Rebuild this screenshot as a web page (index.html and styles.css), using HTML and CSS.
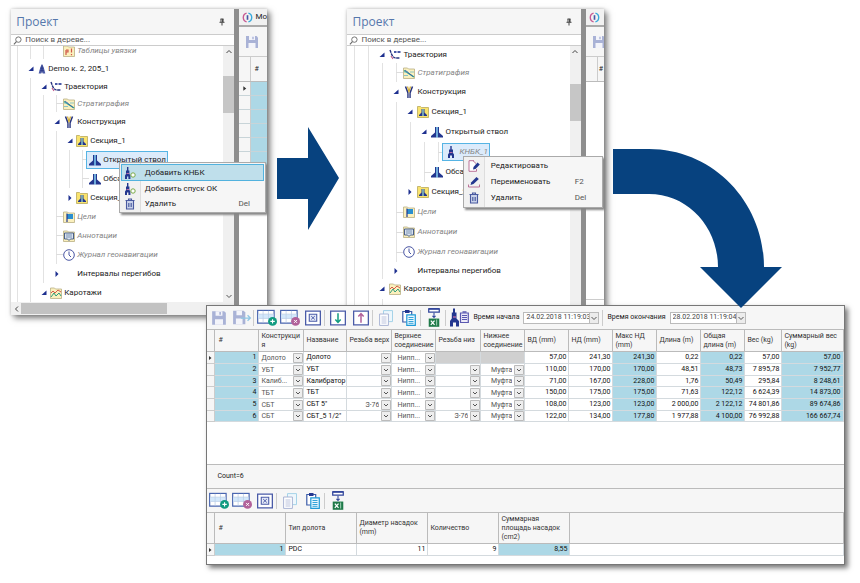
FILE: index.html
```html
<!DOCTYPE html>
<html lang="ru">
<head>
<meta charset="utf-8">
<title>Проект</title>
<link rel="stylesheet" href="styles.css">
</head>
<body>
<svg class="defs" aria-hidden="true">
  <symbol id="pin" viewBox="0 0 8 8"><path d="M2.500 1h3M3 1v3M5 1v3M4.600 1v3M1.500 4.300h5M4 4.500V7.500" fill="none" stroke="#444"/></symbol>
  <symbol id="lens" viewBox="0 0 10 10"><circle cx="6" cy="4" r="3" fill="none" stroke="#666"/><path d="M3.800 6.200 1 9.200" stroke="#666" stroke-width="1.200"/></symbol>
  <symbol id="open" viewBox="0 0 6 6"><path d="M5.500.5V5H.5z" fill="#1d2f8f"/></symbol>
  <symbol id="closed" viewBox="0 0 6 6"><path d="M1.500 0 4.500 3l-3 3z" fill="#1d2f8f"/></symbol>
  <symbol id="tower" viewBox="0 0 12 12"><path d="M6 0 4 4 2 11.500H5l1-3 1 3h3L8 4z" fill="#4a5aa8"/><path d="M6 1v10M3.500 8h5M4.300 5h3.400" stroke="#26337f" stroke-width=".8"/></symbol>
  <symbol id="path" viewBox="0 0 12 12"><path d="M1 1l1.500 4Q4 9 7 9h4" fill="none" stroke="#26337f" stroke-width="1.400" stroke-dasharray="3 .6"/><path d="M5 3h2.500M8.500 3h3" stroke="#4a5aa8" stroke-width="1.800"/><path d="M2 7l2 3" stroke="#c05a8a" stroke-width="1.200"/></symbol>
  <symbol id="folder" viewBox="0 0 12 12"><path d="M.5 1h4l1 1h6v9.500H.5z" fill="#fbf0bd" stroke="#b9ae84" stroke-width=".8"/></symbol>
  <symbol id="strat" viewBox="0 0 12 12"><use href="#folder"/><path d="M1 3.500 11 10" fill="none" stroke="#2c9d8c" stroke-width="1.400"/><path d="M1 5h4M7 5h4M1 8.500h4" stroke="#6fb9c9" stroke-width=".8"/><path d="M2 3l8 6.500" stroke="#3a5bb0" stroke-width=".8"/></symbol>
  <symbol id="casing" viewBox="0 0 12 12"><path d="M2.500.5 5 7v5M9.500.5 7 7v5" fill="none" stroke="#26337f" stroke-width="1.500"/><path d="M4.500.5 6 6 7.500.5" fill="none" stroke="#d7b441" stroke-width="1.300"/><path d="M6 6v6" stroke="#8c93b8"/></symbol>
  <symbol id="well" viewBox="0 0 12 12"><path d="M4 1h1.500v10.500H0V10l4-3.500zM8 1H6.500v10.500H12V10L8 6.500z" fill="#24378f"/><path d="M6 1v10.500" stroke="#58b6e6" stroke-width="1.200"/></symbol>
  <symbol id="section" viewBox="0 0 12 12"><path d="M.5.5h3l1 1h7v10H.5z" fill="#f9e36d" stroke="#b9a95c" stroke-width=".8"/><path d="M4.500 3h1v7h-3.500V9l2.500-2.500zM7.500 3h-1v7H10V9L7.500 6.500z" fill="#24378f"/><path d="M6 3v7" stroke="#58b6e6"/></symbol>
  <symbol id="bha" viewBox="0 0 12 12"><path d="M5.300 0h1.400v3.500H8V7l1 1.500V12H7V9.500H5V12H3V8.500L4 7V3.500h1.300z" fill="#24378f"/><path d="M4.500 6.500h3" stroke="#b76aa6"/></symbol>
  <symbol id="bhaadd" viewBox="0 0 12 12"><path d="M3 0h1.400v3.500h1V7l1 1.500V12h-2V9.500H3V12H1V8.500L2 7V3.500h1z" fill="#24378f"/><path d="M2.500 6.500h2.500" stroke="#b76aa6"/><circle cx="9" cy="8" r="2.200" fill="#fff" stroke="#79a947"/></symbol>
  <symbol id="flag" viewBox="0 0 12 12"><use href="#folder"/><path d="M4 8V3h6v5z" fill="#2a8fd0"/><path d="M4 2.500V11" stroke="#24378f" stroke-width="1.200"/></symbol>
  <symbol id="note" viewBox="0 0 12 12"><use href="#folder"/><path d="M1.500 3h9v6h-3L6 10.500 4.500 9h-3z" fill="#d9e3ee" stroke="#39507f" stroke-width=".9"/><path d="M3 5h6M3 7h6" stroke="#6580a8" stroke-width=".8"/></symbol>
  <symbol id="clock" viewBox="0 0 12 12"><circle cx="6" cy="6" r="5.300" fill="#fff" stroke="#4a56a3"/><path d="M6 2.500V6l2 2" fill="none" stroke="#4a56a3"/></symbol>
  <symbol id="logs" viewBox="0 0 12 12"><use href="#folder"/><path d="M1 6l2-2 2 2 3-3 3 2" fill="none" stroke="#d25a4a"/><path d="M1 10l3-4 2 3 3-3 2 3" fill="none" stroke="#2c9d7c"/></symbol>
  <symbol id="tie" viewBox="0 0 12 12"><use href="#folder"/><path d="M3 5v5M3 5h2v2H3M8.500 3.500v4M8.500 9v1.200" fill="none" stroke="#d0574a" stroke-width="1.200"/></symbol>
  <symbol id="bin" viewBox="0 0 12 12"><path d="M1.500 2.500h9M4.500 2V1h3v1M2.500 3v8h7V3" fill="#c9d2ea" stroke="#4a5aa0" stroke-width="1.100"/><path d="M4.500 5v4M6 5v4M7.500 5v4" stroke="#4a5aa0" stroke-width=".8"/></symbol>
  <symbol id="edit" viewBox="0 0 12 12"><path d="M6 .7H1v10.600h7.500V9M5 .7 8 3.500" fill="#fff" stroke="#b5648f" stroke-width=".9"/><path d="M5 9.500 5.500 7 9.500 2.500l2.300 1.900L7.500 9z" fill="#24378f"/></symbol>
  <symbol id="rename" viewBox="0 0 12 12"><path d="M.5 8.500v2.500h11V8.500" fill="none" stroke="#b5648f" stroke-width=".9"/><path d="M2.500 9l.8-2.700L8.500 1l2.300 1.900L5.500 8z" fill="#24378f"/></symbol>
  <symbol id="app" viewBox="0 0 12 12"><path d="M5 1.200a5 5 0 0 0 0 9.600" fill="none" stroke="#c75a93" stroke-width="1.500"/><path d="M7 1.200a5 5 0 0 1 0 9.600" fill="none" stroke="#36a9dc" stroke-width="1.500"/><path d="M6 3.500v5" stroke="#4456a6" stroke-width="1.800"/></symbol>
  <symbol id="save" viewBox="0 0 14 14"><path d="M1 1h10.500L13 2.500V13H1z" fill="#a9b2d6"/><path d="M4 1h6v4H4zM3.500 8h7v5h-7z" fill="#f3f4fa"/><path d="M8 1.800v2.400" stroke="#a9b2d6" stroke-width="1.400"/></symbol>
  <symbol id="saveas" viewBox="0 0 18 14"><path d="M1 1h9.500L12 2.500V13H1z" fill="#a9b2d6"/><path d="M4 1h5v4H4zM3.500 8h6v5h-6z" fill="#f3f4fa"/><path d="M8 7.500h8.500M14 5l2.500 2.500L14 10" fill="none" stroke="#8fc6e4" stroke-width="1.200"/></symbol>
  <symbol id="grid" viewBox="0 0 18 15"><path d="M.6 1h14.800v11.500H.6z" fill="#fff" stroke="#4a66b0" stroke-width="1.100"/><path d="M1.200 4.500h13.600v3.800H1.200z" fill="#d3e8fb"/><path d="M5.500 1.500V12M10.300 1.500V12M1.200 4.500h13.600M1.200 8.300h13.600" stroke="#bccfe8" stroke-width=".7"/></symbol>
  <symbol id="rowadd" viewBox="0 0 18 15"><use href="#grid"/><circle cx="14" cy="11" r="4" fill="#119b80"/><path d="M14 9v4M12 11h4" stroke="#fff"/></symbol>
  <symbol id="rowdel" viewBox="0 0 18 15"><use href="#grid"/><circle cx="14" cy="11" r="4" fill="#b2619a"/><path d="M12.700 9.700l2.600 2.600M15.300 9.700l-2.600 2.600" stroke="#fff" stroke-width=".9"/></symbol>
  <symbol id="clear" viewBox="0 0 15 14"><path d="M.6.6h13.800v12.800H.6z" fill="#fff" stroke="#4a5ba8" stroke-width="1.200"/><path d="M4 3.500h7v6.500H4z" fill="#e4e9f7" stroke="#4a5ba8"/><path d="M5.800 5.200l3.400 3.200M9.200 5.200 5.800 8.400" stroke="#4a5ba8" stroke-width=".9"/></symbol>
  <symbol id="down" viewBox="0 0 15 14"><path d="M.6.6h13.800v12.800H.6z" fill="#fff" stroke="#4a5ba8" stroke-width="1.200"/><path d="M7.500 2.500V11M5 8.500l2.500 2.700L10 8.500" fill="none" stroke="#119b80" stroke-width="1.400"/></symbol>
  <symbol id="up" viewBox="0 0 15 14"><path d="M.6.6h13.800v12.800H.6z" fill="#fff" stroke="#4a5ba8" stroke-width="1.200"/><path d="M7.500 11.500V3M5 5.500l2.500-2.700L10 5.500" fill="none" stroke="#b2619a" stroke-width="1.400"/></symbol>
  <symbol id="copy" viewBox="0 0 14 16"><path d="M4.500.6h9v11h-9z" fill="#eef7fc" stroke="#a6d3e8"/><path d="M.6 4h8.800v11.400H.6z" fill="#fff" stroke="#a9b4d4"/><path d="M2.500 7h5M2.500 9h5M2.500 11h5M2.500 13h5" stroke="#a9b4d4" stroke-width=".8"/></symbol>
  <symbol id="paste" viewBox="0 0 14 16"><path d="M.8 1.500h8.900V12H.8z" fill="#fff" stroke="#3a5ba8" stroke-width="1.200"/><path d="M3 0h4.500v3H3z" fill="#24378f"/><path d="M4.800 4.800h8.500v10.500H4.800z" fill="#eaf7fe" stroke="#1f9ad6" stroke-width="1.200"/><path d="M6.500 7.500h5M6.500 9.500h5M6.500 11.500h5M6.500 13.300h5" stroke="#1f9ad6" stroke-width=".9"/></symbol>
  <symbol id="excel" viewBox="0 0 12 18"><path d="M1 .8h10V4H1z" fill="#fff" stroke="#33479c" stroke-width="1.200"/><path d="M1 .8h10" stroke="#33479c" stroke-width="1.600"/><path d="M6 4.500V9M4.500 7.500 6 9l1.500-1.500" fill="none" stroke="#33479c"/><path d="M1 10h10v7.800H1z" fill="#1f7a49"/><path d="M3 12l3.500 4M6.500 12 3 16" stroke="#fff" stroke-width="1.200"/><path d="M8.500 11v5.500" stroke="#9fd0b3"/></symbol>
  <symbol id="bhalist" viewBox="0 0 20 18"><path d="M4 0h2v4h1.500v6L10 12.500V18H7v-4H4v4H1v-5.500L2.800 10V4H4z" fill="#24378f"/><path d="M4 8.500h3" stroke="#b76aa6" stroke-width="1.400"/><path d="M11.500 4.500h7.800V14h-7.800z" fill="#eceaf8" stroke="#5a58b0" stroke-width="1.200"/><path d="M13.500 3.500h4" stroke="#5a58b0" stroke-width="1.500"/><path d="M13 7h5M13 9h5M13 11h5" stroke="#5a58b0"/></symbol>
  <symbol id="chev" viewBox="0 0 8 8"><path d="M1.500 3 4 5.500 6.500 3" fill="none" stroke="#555"/></symbol>
  <symbol id="cup" viewBox="0 0 8 8"><path d="M1.500 5 4 2.500 6.500 5" fill="none" stroke="#444"/></symbol>
  <symbol id="cleft" viewBox="0 0 8 8"><path d="M5 1.500 2.500 4 5 6.500" fill="none" stroke="#444"/></symbol>
  <symbol id="cur" viewBox="0 0 6 6"><path d="M2 1l2.500 2L2 5z" fill="#333"/></symbol>
</svg>

<main class="stage">

<section class="window first">
  <div class="project">
    <header class="title"><h2>Проект</h2><svg><use href="#pin"/></svg></header>
    <label class="search"><svg><use href="#lens"/></svg><input type="text" placeholder="Поиск в дереве..." aria-label="Поиск в дереве"></label>
    <div class="body">
      <ul class="tree">
        <li class="top"><i></i><i></i><i class="tick"></i><b></b><svg class="icon"><use href="#tie"/></svg><span class="dim">Таблицы увязки</span></li>
        <li class="root"><i></i><b><svg><use href="#open"/></svg></b><svg class="icon"><use href="#tower"/></svg><span>Demo к. 2, 205_1</span></li>
        <li class="short"><i></i><i></i><b><svg><use href="#open"/></svg></b><svg class="icon"><use href="#path"/></svg><span>Траектория</span></li>
        <li class="short"><i></i><i></i><i></i><b class="tick"></b><svg class="icon"><use href="#strat"/></svg><span class="dim">Стратиграфия</span></li>
        <li><i></i><i></i><i></i><b><svg><use href="#open"/></svg></b><svg class="icon"><use href="#casing"/></svg><span>Конструкция</span></li>
        <li><i></i><i></i><i></i><i></i><b><svg><use href="#open"/></svg></b><svg class="icon"><use href="#section"/></svg><span>Секция_1</span></li>
        <li><i></i><i></i><i></i><i></i><i></i><b class="tick"></b><span class="picked"><svg class="icon"><use href="#well"/></svg><span>Открытый ствол</span></span></li>
        <li><i></i><i></i><i></i><i></i><i></i><b class="tick"></b><svg class="icon"><use href="#well"/></svg><span>Обсаженный</span></li>
        <li><i></i><i></i><i></i><i></i><b><svg><use href="#closed"/></svg></b><svg class="icon"><use href="#section"/></svg><span>Секция_2</span></li>
        <li><i></i><i></i><i></i><b class="tick"></b><svg class="icon"><use href="#flag"/></svg><span class="dim">Цели</span></li>
        <li><i></i><i></i><i></i><b class="tick"></b><svg class="icon"><use href="#note"/></svg><span class="dim">Аннотации</span></li>
        <li><i></i><i></i><i></i><b class="tick"></b><svg class="icon"><use href="#clock"/></svg><span class="dim">Журнал геонавигации</span></li>
        <li><i></i><i></i><i></i><b><svg><use href="#closed"/></svg></b><svg class="icon"></svg><span>Интервалы перегибов</span></li>
        <li><i></i><i></i><b><svg><use href="#open"/></svg></b><svg class="icon"><use href="#logs"/></svg><span>Каротажи</span></li>
      </ul>
      <div class="vbar"><svg><use href="#cup"/></svg><div class="thumb"></div><svg><use href="#chev"/></svg></div>
    </div>
    <div class="hbar"><svg><use href="#cleft"/></svg><div class="thumb"></div></div>
  </div>
  <div class="splitter"></div>
  <div class="doc">
    <div class="tab"><svg><use href="#app"/></svg><span>Мо</span></div>
    <div class="tools"><svg><use href="#save"/></svg></div>
    <div class="head"><span></span><span>#</span></div>
    <div class="line"><span><svg><use href="#cur"/></svg></span><span></span></div>
    <div class="line"><span></span><span></span></div>
    <div class="line"><span></span><span></span></div>
    <div class="line"><span></span><span></span></div>
    <div class="line"><span></span><span></span></div>
    <div class="line"><span></span><span></span></div>
    <div class="line"><span></span><span></span></div>
    <div class="line"><span></span><span></span></div>
    <div class="line"><span></span><span></span></div>
  </div>
  <menu class="popup">
    <li><button class="hot"><svg><use href="#bhaadd"/></svg><span>Добавить КНБК</span></button></li>
    <li><button><svg><use href="#bhaadd"/></svg><span>Добавить спуск ОК</span></button></li>
    <li><button><svg><use href="#bin"/></svg><span>Удалить</span><kbd>Del</kbd></button></li>
  </menu>
</section>

<svg class="arrow" viewBox="0 0 62 103" aria-hidden="true"><path d="M0 31h31V0l31 51-31 52V72H0z"/></svg>

<section class="window second">
  <div class="project">
    <header class="title"><h2>Проект</h2><svg><use href="#pin"/></svg></header>
    <label class="search"><svg><use href="#lens"/></svg><input type="text" placeholder="Поиск в дереве..." aria-label="Поиск в дереве"></label>
    <div class="body">
      <ul class="tree">
        <li class="short"><i></i><i></i><b><svg><use href="#open"/></svg></b><svg class="icon"><use href="#path"/></svg><span>Траектория</span></li>
        <li class="near"><i></i><i></i><i></i><b class="tick"></b><svg class="icon"><use href="#strat"/></svg><span class="dim">Стратиграфия</span></li>
        <li><i></i><i></i><i></i><b><svg><use href="#open"/></svg></b><svg class="icon"><use href="#casing"/></svg><span>Конструкция</span></li>
        <li><i></i><i></i><i></i><i></i><b><svg><use href="#open"/></svg></b><svg class="icon"><use href="#section"/></svg><span>Секция_1</span></li>
        <li><i></i><i></i><i></i><i></i><i></i><b><svg><use href="#open"/></svg></b><svg class="icon"><use href="#well"/></svg><span>Открытый ствол</span></li>
        <li><i></i><i></i><i></i><i></i><i></i><i></i><b class="tick"></b><span class="picked"><svg class="icon"><use href="#bha"/></svg><span class="dim">КНБК_1</span></span></li>
        <li><i></i><i></i><i></i><i></i><i></i><b class="tick"></b><svg class="icon"><use href="#well"/></svg><span>Обсаженный</span></li>
        <li><i></i><i></i><i></i><i></i><b><svg><use href="#closed"/></svg></b><svg class="icon"><use href="#section"/></svg><span>Секция_2</span></li>
        <li><i></i><i></i><i></i><b class="tick"></b><svg class="icon"><use href="#flag"/></svg><span class="dim">Цели</span></li>
        <li><i></i><i></i><i></i><b class="tick"></b><svg class="icon"><use href="#note"/></svg><span class="dim">Аннотации</span></li>
        <li><i></i><i></i><i></i><b class="tick"></b><svg class="icon"><use href="#clock"/></svg><span class="dim">Журнал геонавигации</span></li>
        <li class="short"><i></i><i></i><i></i><b><svg><use href="#closed"/></svg></b><svg class="icon"></svg><span>Интервалы перегибов</span></li>
        <li><i></i><i></i><b><svg><use href="#open"/></svg></b><svg class="icon"><use href="#logs"/></svg><span>Каротажи</span></li>
        <li><i></i><i></i><i></i></li>
      </ul>
      <div class="vbar"><svg><use href="#cup"/></svg><div class="thumb"></div></div>
    </div>
  </div>
  <div class="splitter"></div>
  <div class="doc">
    <div class="tab"><svg><use href="#app"/></svg></div>
    <div class="tools"><svg><use href="#save"/></svg></div>
    <div class="head"><span></span><span>#</span></div>
    <div class="page"></div>
  </div>
  <menu class="popup">
    <li><button><svg><use href="#edit"/></svg><span>Редактировать</span></button></li>
    <li><button><svg><use href="#rename"/></svg><span>Переименовать</span><kbd>F2</kbd></button></li>
    <li><button><svg><use href="#bin"/></svg><span>Удалить</span><kbd>Del</kbd></button></li>
  </menu>
</section>

<section class="editor">
  <div class="toolbar">
    <button aria-label="Сохранить"><svg class="sq"><use href="#save"/></svg></button>
    <button aria-label="Сохранить как"><svg class="wide"><use href="#saveas"/></svg></button>
    <hr>
    <button aria-label="Добавить строку"><svg class="wide"><use href="#rowadd"/></svg></button>
    <button aria-label="Удалить строку"><svg class="wide"><use href="#rowdel"/></svg></button>
    <button aria-label="Очистить"><svg class="sq"><use href="#clear"/></svg></button>
    <hr>
    <button aria-label="Вниз"><svg class="sq"><use href="#down"/></svg></button>
    <button aria-label="Вверх"><svg class="sq"><use href="#up"/></svg></button>
    <hr>
    <button aria-label="Копировать"><svg class="sq"><use href="#copy"/></svg></button>
    <button aria-label="Вставить"><svg class="sq"><use href="#paste"/></svg></button>
    <hr>
    <button aria-label="Экспорт в Excel"><svg class="wide"><use href="#excel"/></svg></button>
    <hr>
    <button aria-label="КНБК"><svg class="wide"><use href="#bhalist"/></svg></button>
    <label for="from">Время начала</label>
    <span class="date"><input id="from" type="text" value="24.02.2018 11:19:03"><button aria-label="Выбрать дату начала"><svg><use href="#chev"/></svg></button></span>
    <hr>
    <label for="to">Время окончания</label>
    <span class="date"><input id="to" type="text" value="28.02.2018 11:19:04"><button aria-label="Выбрать дату окончания"><svg><use href="#chev"/></svg></button></span>
  </div>
  <div class="sheet">
  <table class="parts">
    <colgroup><col class="w8"><col class="w44"><col class="w45"><col class="w43"><col class="w45"><col class="w44"><col class="w45"><col class="w44"><col class="w44"><col class="w44"><col class="w44"><col class="w44"><col class="w44"><col class="w37"><col class="w61"></colgroup>
    <thead><tr><th></th><th>#</th><th>Конструкци<br>я</th><th>Название</th><th>Резьба верх</th><th>Верхнее соединение</th><th>Резьба низ</th><th>Нижнее соединение</th><th>ВД (mm)</th><th>НД (mm)</th><th>Макс НД (mm)</th><th>Длина (m)</th><th>Общая длина (m)</th><th>Вес (kg)</th><th>Суммарный вес (kg)</th></tr></thead>
    <tbody>
      <tr><td class="mark"><svg><use href="#cur"/></svg></td><td class="calc">1</td><td><select aria-label="Конструкция"><option>Долото</option></select></td><td class="name">Долото</td><td><select aria-label="Резьба верх"><option></option></select></td><td><select class="mid" aria-label="Верхнее соединение"><option>Нипп...</option></select></td><td class="off"></td><td class="off"></td><td>57,00</td><td>241,30</td><td class="calc">241,30</td><td>0,22</td><td class="calc">0,22</td><td>57,00</td><td class="calc">57,00</td></tr>
      <tr><td class="mark"></td><td class="calc">2</td><td><select aria-label="Конструкция"><option>УБТ</option></select></td><td class="name">УБТ</td><td><select aria-label="Резьба верх"><option></option></select></td><td><select class="mid" aria-label="Верхнее соединение"><option>Нипп...</option></select></td><td><select aria-label="Резьба низ"><option></option></select></td><td><select class="end" aria-label="Нижнее соединение"><option>Муфта</option></select></td><td>110,00</td><td>170,00</td><td class="calc">170,00</td><td>48,51</td><td class="calc">48,73</td><td>7 895,78</td><td class="calc">7 952,77</td></tr>
      <tr><td class="mark"></td><td class="calc">3</td><td><select aria-label="Конструкция"><option>Калиб...</option></select></td><td class="name">Калибратор</td><td><select aria-label="Резьба верх"><option></option></select></td><td><select class="mid" aria-label="Верхнее соединение"><option>Нипп...</option></select></td><td><select aria-label="Резьба низ"><option></option></select></td><td><select class="end" aria-label="Нижнее соединение"><option>Муфта</option></select></td><td>71,00</td><td>167,00</td><td class="calc">228,00</td><td>1,76</td><td class="calc">50,49</td><td>295,84</td><td class="calc">8 248,61</td></tr>
      <tr><td class="mark"></td><td class="calc">4</td><td><select aria-label="Конструкция"><option>ТБТ</option></select></td><td class="name">ТБТ</td><td><select aria-label="Резьба верх"><option></option></select></td><td><select class="mid" aria-label="Верхнее соединение"><option>Нипп...</option></select></td><td><select aria-label="Резьба низ"><option></option></select></td><td><select class="end" aria-label="Нижнее соединение"><option>Муфта</option></select></td><td>150,00</td><td>175,00</td><td class="calc">175,00</td><td>71,63</td><td class="calc">122,12</td><td>6 624,39</td><td class="calc">14 873,00</td></tr>
      <tr><td class="mark"></td><td class="calc">5</td><td><select aria-label="Конструкция"><option>СБТ</option></select></td><td class="name">СБТ 5"</td><td><select class="end" aria-label="Резьба верх"><option>З-76</option></select></td><td><select class="mid" aria-label="Верхнее соединение"><option>Нипп...</option></select></td><td><select aria-label="Резьба низ"><option></option></select></td><td><select class="end" aria-label="Нижнее соединение"><option>Муфта</option></select></td><td>108,00</td><td>123,00</td><td class="calc">123,00</td><td>2 000,00</td><td class="calc">2 122,12</td><td>74 801,86</td><td class="calc">89 674,86</td></tr>
      <tr><td class="mark"></td><td class="calc">6</td><td><select aria-label="Конструкция"><option>СБТ</option></select></td><td class="name">СБТ_5 1/2"</td><td><select aria-label="Резьба верх"><option></option></select></td><td><select class="mid" aria-label="Верхнее соединение"><option>Нипп...</option></select></td><td><select class="end" aria-label="Резьба низ"><option>З-76</option></select></td><td><select class="end" aria-label="Нижнее соединение"><option>Муфта</option></select></td><td>122,00</td><td>134,00</td><td class="calc">177,80</td><td>1 977,88</td><td class="calc">4 100,00</td><td>76 992,88</td><td class="calc">166 667,74</td></tr>
    </tbody>
  </table>
  </div>
  <div class="count">Count=6</div>
  <div class="toolbar">
    <button aria-label="Добавить насадку"><svg class="wide"><use href="#rowadd"/></svg></button>
    <button aria-label="Удалить насадку"><svg class="wide"><use href="#rowdel"/></svg></button>
    <button aria-label="Очистить"><svg class="sq"><use href="#clear"/></svg></button>
    <hr>
    <button aria-label="Копировать"><svg class="sq"><use href="#copy"/></svg></button>
    <button aria-label="Вставить"><svg class="sq"><use href="#paste"/></svg></button>
    <hr>
    <button aria-label="Экспорт в Excel"><svg class="wide"><use href="#excel"/></svg></button>
  </div>
  <table class="nozzles">
    <colgroup><col class="w8"><col class="w71"><col class="w71"><col class="w71"><col class="w71"><col class="w71"><col></colgroup>
    <thead><tr><th></th><th>#</th><th>Тип долота</th><th>Диаметр насадок (mm)</th><th>Количество</th><th>Суммарная площадь насадок (cm2)</th><th></th></tr></thead>
    <tbody><tr><td class="mark"><svg><use href="#cur"/></svg></td><td class="calc">1</td><td class="name">PDC</td><td>11</td><td>9</td><td class="calc">8,55</td><td></td></tr></tbody>
  </table>
</section>

<svg class="bend" viewBox="0 0 169 159" aria-hidden="true"><path d="M0 0H36C100 0 151 53 151 118H169L128 159 87 118H105C105 78 75 45 36 45H0z"/></svg>

</main>
</body>
</html>
```
FILE: styles.css
```css
* { box-sizing: border-box; }

body {
  margin: 0;
  background: #fff;
  color: #222;
  font: 8px/10px Roboto, "Noto Sans", sans-serif;
}

button, input, select { font: inherit; color: inherit; }
button { border: 0; padding: 0; background: none; }
svg { display: block; flex: none; }
.defs { position: absolute; width: 0; height: 0; }

/* windows float on a free canvas */
.stage { position: relative; min-height: 100vh; overflow: hidden; }
.window, .editor, .arrow, .bend { position: absolute; }

.window {
  top: 9px;
  width: 29.8%;
  display: flex;
  background: #fff;
  box-shadow: 3px 3px 6px #777, 0 0 3px #ccc;
}
.first { left: 1.3%; --step: 13px; --row: 19px; --doc: 28px; }
.second { left: 40.4%; --step: 14px; --row: 20px; --doc: 18px; }

.project { flex: 1; min-width: 0; display: flex; flex-direction: column; }
.title {
  height: 25px;
  padding: 0 8px 0 5px;
  display: flex;
  align-items: center;
  justify-content: space-between;
  background: #f6f6f6;
}
.title h2 { margin: 0; font: 400 12px/16px "Open Sans", "Noto Sans", sans-serif; color: #5577ac; }
.title svg { width: 8px; height: 8px; }
.search {
  height: 12px;
  padding-left: 2px;
  display: flex;
  align-items: center;
  gap: 3px;
  border: 1px solid #ccc;
  border-width: 1px 0;
}
.search svg { width: 9px; height: 9px; }
.search input { flex: 1; min-width: 0; height: 10px; padding: 0; border: 0; background: none; }
.search input::placeholder { color: #555; opacity: 1; }

.body { display: flex; }
.tree { flex: 1; min-width: 0; margin: 0; padding: 0; list-style: none; overflow: hidden; }
.tree li { height: var(--row); display: flex; align-items: center; white-space: nowrap; }
.tree .short { height: 17px; }
.tree .near { height: 19px; }
.tree .top { height: 17px; margin-top: -4px; }
.tree i, .tree b { flex: none; width: var(--step); align-self: stretch; }
.tree i { background: linear-gradient(#e2e2e2, #e2e2e2) center / 1px 100% no-repeat; }
.tree b { display: flex; align-items: center; justify-content: center; }
.tree b svg { width: 6px; height: 6px; }
.tree b.tick {
  background: linear-gradient(#ddd, #ddd) right center / 7px 1px no-repeat,
    linear-gradient(#e2e2e2, #e2e2e2) center / 1px 100% no-repeat;
}
.icon { width: 12px; height: 12px; margin-right: 2px; }
.root .icon { width: 10px; margin-right: 1px; }
.dim { color: #858585; font-style: italic; }
.picked {
  height: 18px;
  display: flex;
  align-items: center;
  margin-left: -3px;
  padding: 0 1px 0 2px;
  border: 1px solid #56b4e4;
  background: #dcebfb;
}

.vbar {
  width: 11px;
  padding: 2px 0;
  display: flex;
  flex-direction: column;
  align-items: center;
  background: #f0f0f0;
}
.vbar svg { width: 8px; height: 8px; }
.vbar .thumb { width: 100%; height: 37px; margin: 20px 0 auto; background: #c6c6c6; }
.second .vbar .thumb { margin-top: 28px; }
.hbar { height: 13px; padding: 1px 0 1px 2px; display: flex; align-items: center; background: #f0f0f0; }
.hbar svg { width: 8px; height: 8px; }
.hbar .thumb { width: 66%; height: 100%; background: #c2c2c2; }
.splitter { width: 5px; background: #8e8e8e; }

.doc { width: var(--doc); overflow: hidden; background: #fff; }
.tab { height: 18px; padding-left: 3px; display: flex; align-items: center; gap: 2px; border-bottom: 2px solid #aaa; background: #f1f1f1; white-space: nowrap; }
.tab svg { width: 11px; height: 11px; }
.tools { height: 30px; padding-left: 6px; display: flex; align-items: center; background: #f6f6f6; border-bottom: 1px solid #ccc; }
.tools svg { width: 14px; height: 14px; }
.head, .line { display: flex; }
.head { height: 25px; background: #f6f6f6; border-bottom: 1px solid #bbb; line-height: 24px; font-size: 7px; }
.line { height: 14px; }
.head span:first-child, .line span:first-child { width: 12px; flex: none; border-right: 1px solid #ccc; }
.head span:last-child { padding-left: 3px; }
.second .head span:last-child { padding-left: 1px; }
.line span { border-bottom: 1px solid #c8d4d8; }
.line span:first-child { background: #f6f6f6; }
.line span:last-child { flex: 1; background: #add8e6; }
.line svg { width: 7px; height: 7px; margin: 3px 2px; }
.page { height: 218px; border-bottom: 1px solid #ccc; }

/* context menus */
.popup {
  position: absolute;
  margin: 0;
  padding: 1px;
  list-style: none;
  border: 1px solid #aaa;
  background: linear-gradient(90deg, #f1f1f1 20px, #ddd 20px, #ddd 21px, #f6f6f6 21px);
  box-shadow: 2px 2px 2px #888;
}
.first .popup { top: 153px; left: 42%; right: 1px; }
.second .popup { top: 147px; left: 45%; right: 1px; }
.popup button { width: 100%; height: 15px; padding: 0 14px 0 3px; display: flex; align-items: center; text-align: left; white-space: nowrap; }
.second .popup button { height: 16px; }
.popup svg { width: 12px; height: 12px; margin-right: 9px; }
.second .popup svg { margin-right: 11px; }
.popup kbd { width: 12px; margin-left: auto; font: inherit; color: #555; }
.popup .hot { height: 17px; padding: 0 13px 0 2px; border: 1px solid #52b2de; background: #bfdfeb; }

.arrow, .bend { fill: #07427f; }
.arrow { top: 127px; left: 32.2%; width: 62px; height: 103px; }
.bend { top: 149px; left: 71.3%; width: 169px; height: 159px; }

/* assembly editor */
.editor {
  top: 305px;
  left: 24%;
  width: 74.2%;
  border: 1px solid #777;
  background: #fff;
  box-shadow: 3px 3px 5px #777;
  font-size: 7px;
  line-height: 9px;
  padding-bottom: 8px;
}
.toolbar {
  height: 24px;
  display: flex;
  align-items: center;
  background: #f6f6f6;
  border-bottom: 1px solid #bbb;
  white-space: nowrap;
}
.toolbar hr { width: 1px; height: 16px; margin: 0 1px 0 0; border: 0; background: #ccc; }
.toolbar > button { width: 23px; height: 20px; display: flex; align-items: center; justify-content: center; }
.toolbar label { margin: 0 4px 0 3px; }
.sq { width: 16px; height: 16px; }
.wide { width: 20px; height: 19px; }
.date { width: 76px; height: 12px; margin-right: 3px; display: flex; border: 1px solid #bbb; background: #fff; }
.date input { flex: 1; min-width: 0; padding: 0 0 0 2px; border: 0; background: none; color: #444; }
.date button { width: 9px; border-left: 1px solid #bbb; background: #ececec; display: flex; align-items: center; justify-content: center; }
.date svg { width: 8px; height: 8px; }

.sheet { height: 134px; }
table { width: 100%; table-layout: fixed; border-collapse: separate; border-spacing: 0; }
th, td { padding: 0 2px; border: 1px solid #d4dade; border-width: 0 1px 1px 0; white-space: nowrap; overflow: hidden; }
th { height: 22px; padding: 0 0 0 2px; text-align: left; font-weight: 400; color: #333; background: #f6f6f6; border-color: #bbb; white-space: normal; }
td { height: 12px; text-align: right; color: #111; }
.parts tr:nth-child(3n) td { height: 11px; }
td:has(select) { padding: 0; }
td.name { text-align: left; }
td.mark { padding: 0; background: #f6f6f6; border-color: #ccc; }
td.mark svg { width: 6px; height: 6px; }
td.calc { background: #add8e6; }
td.off { background: #d0d0d0; }
select {
  display: block;
  width: 100%;
  height: 10px;
  padding: 0 12px 0 2px;
  border: 0;
  color: #555;
  line-height: 10px;
  appearance: none;
  background: url("data:image/svg+xml,%3Csvg xmlns='http://www.w3.org/2000/svg' width='10' height='10'%3E%3Cpath d='M.5.5h9v9h-9z' fill='%23eee' stroke='%23bbb'/%3E%3Cpath d='M3 4l2 2 2-2' fill='none' stroke='%23555'/%3E%3C/svg%3E") right center no-repeat;
}
select.mid { padding-left: 5px; }
select.end { text-align: right; text-align-last: right; }
.w8 { width: 8px; }
.w37 { width: 37px; }
.w43 { width: 43px; }
.w44 { width: 44px; }
.w45 { width: 45px; }
.w61 { width: 61px; }
.w71 { width: 71px; }

.count { height: 25px; padding-left: 10px; line-height: 23px; background: #f6f6f6; border: 1px solid #bbb; border-width: 1px 0; }
.nozzles th { height: 31px; }
.nozzles th:nth-child(2), .parts th:nth-child(2) { padding-left: 3px; }
```
